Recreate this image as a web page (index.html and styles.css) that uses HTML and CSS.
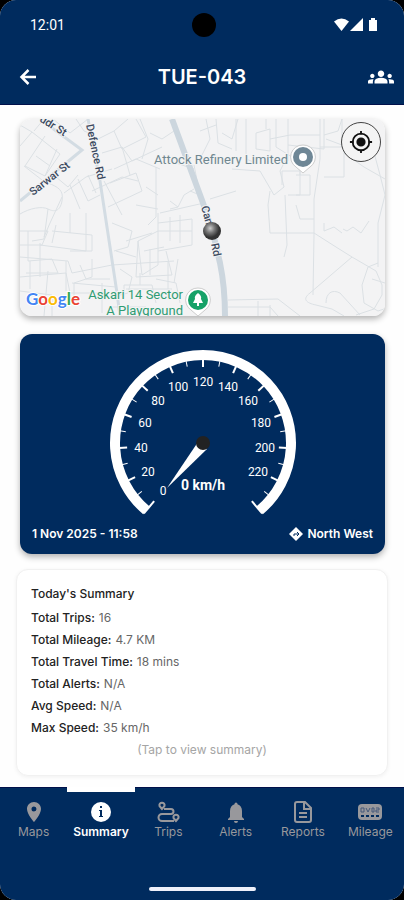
FILE: index.html
```html
<!DOCTYPE html>
<html lang="en">

<head>
    <meta charset="UTF-8">
    <meta name="viewport" content="width=device-width, initial-scale=1.0">
    <title>TUE-043</title>
    <link rel="stylesheet" href="styles.css">
</head>

<body>
    <div class="screen">
        <header>
            <div class="status">
                <span class="time">12:01</span>
                <span class="camera"></span>
                <svg class="signals" width="44" height="16" viewBox="0 0 44 16" fill="#fff">
                    <path d="M0 4.500Q7.500-1.500 15 4.500L7.500 14z" />
                    <path d="M29 1v13H16z" />
                    <path d="M37 1h4v2h2v11h-8V3h2z" />
                </svg>
            </div>
            <div class="title-bar">
                <button class="icon-btn back" aria-label="Back">
                    <svg width="24" height="24" viewBox="0 0 24 24" fill="none" stroke="#fff" stroke-width="2.500">
                        <path d="M20 12H6M12.500 5l-7 7 7 7" />
                    </svg>
                </button>
                <h1>TUE-043</h1>
                <button class="icon-btn group" aria-label="Group">
                    <svg width="26" height="26" viewBox="0 0 24 24" fill="#fff">
                        <path d="M12 12.750c1.630 0 3.070.390 4.240.900 1.080.480 1.760 1.560 1.760 2.730V18H6v-1.610c0-1.180.680-2.260 1.760-2.730 1.170-.520 2.610-.910 4.240-.910zM4 13c1.100 0 2-.900 2-2s-.900-2-2-2-2 .900-2 2 .900 2 2 2zm1.130 1.100C4.760 14.040 4.390 14 4 14c-.990 0-1.930.210-2.780.580C.480 14.900 0 15.620 0 16.430V18h4.500v-1.610c0-.830.230-1.610.630-2.290zM20 13c1.100 0 2-.900 2-2s-.900-2-2-2-2 .900-2 2 .900 2 2 2zm4 3.430c0-.810-.480-1.530-1.220-1.850C21.930 14.210 20.990 14 20 14c-.390 0-.760.040-1.130.100.400.680.630 1.460.630 2.290V18H24v-1.570zM12 6c1.660 0 3 1.340 3 3s-1.340 3-3 3-3-1.340-3-3 1.340-3 3-3z" />
                    </svg>
                </button>
            </div>
        </header>

        <main>
            <section class="map">
                <svg class="map-img" viewBox="0 0 365 197" preserveAspectRatio="xMidYMid slice">
                    <defs>
                        <radialGradient id="ball" cx="40%" cy="35%">
                            <stop offset="0" stop-color="#ccc" />
                            <stop offset="0.500" stop-color="#777" />
                            <stop offset="1" stop-color="#333" />
                        </radialGradient>
                    </defs>
                    <rect width="365" height="197" fill="#f3f3f4" />
                    <!-- small streets -->
                    <g fill="none" stroke="#dbe0e4" stroke-width="1">
                        <path d="M0 27l12-14 28 22-15 22-20-10 20-30M14 12l10-12M16 37l14 10M25 57l12-27M4 47l18 14M33 0l17 14 18-14M56 0l8 12 10 4M0 6l12 7" />
                        <path d="M0 95c10-6 22-8 28-5s12 3 14-8-4-14-14-18l8-6 12 10 10-12M28 90l-4 30-12 2M42 78l-12 26-6 14M44 74l22-16 26-8M50 66l10 24M58 60l10 22 12-6M68 56l8 18M72 72l30-14 16 4M88 88l34-16-6-18-26 10M84 62l18 34" />
                        <path d="M78 20l16-8 8 18 24-12-10-18M82 34l20-6 10 14 30-14M94 12l14-12M94 50l22-10 24 10M102 28l8 28M120 0l8 20-6 20M130 14l12 6 12-8M136 48v50l-8 8M116 86l22 4M126 68l12 8" />
                        <path d="M150 82l8 6 6-12 10-6M158 88l-8 2M174 46l6 30-10-4M150 42l24 8M140 94l44-10M138 104l34-4v26l-34 6M138 94v52l-16 10-4-34 20-10M150 98v24M160 96v28M138 112h34" />
                        <path d="M0 112h28l-6 14H0M8 112v30l24-2 6 14H6M20 126l46 6v-38M36 106l-4 18M32 112l40 4v16H50M50 94v20M0 138l48 4 4 12 40-8 62-4M10 142v28M20 124v34M0 158l46-4 4 20h36M28 152l-4 45M46 142v30M0 172l32 4v21M60 146l6 14h24M72 140v18l-18 6v20M52 164l44 4M100 150l12 8-4 16-16 4M118 122l-2 36 36-2-6-24M124 132l20-4M130 130v26M106 122l26-8M92 104l20 8-4 16-14 4M96 132l20 6" />
                        <path d="M104 180v-14h28l4 18M120 166v-12M136 160l20 4 4 20M148 142v36M158 140l-4 24M106 170h46M82 164v30M92 188h34" />
                        <path d="M186 0l4 20-8 16M180 12l16-6M196 0l2 24 14 6M202 14l10 6 6-20M216 0v32M226 0v40l10 4M236 14l14-4v22l-14-2V14M246 10V0M256 0v28l16 10 16-10M250 20l20-4h30M268 0v42M268 26l36 4V0M304 16l14-4 4-12M300 0v40l-6 40v36l-1 60M322 0v28h-22M306 20l16 6M324 28v30h-20M324 34l20 14 21 12" />
                        <path d="M212 50l28 2 14 24 10-8-4-16 6-12M250 72l-2 14 2 28h44M262 66v-14h18v24h-12M276 56h14v20h-14M265 76l2 50-3 12M276 86l4 14h14M190 80l26-8M280 30v26" />
                        <path d="M294 114l22 14 16 10 24 14 6 14v10l-8 14-18 6M352 26l8 30 5 20-7 28v44M323 110l4 2 6-4 8 6 8-12M304 104v8l10-4 8 6M332 138l-42 36c-8 6-4 10 6 12l16 4 12 7M306 184c0-10 6-14 14-10l20 22M358 144l-10 4-6 18 2 18 14 8 6-2M352 160l13 4" />
                        <path d="M208 181l50-1 22 17M208 188h42l8 9M238 182v15M250 186v11" />
                    </g>
                    <g fill="none" stroke="#d3dce3">
                        <path d="M0 82L62 31 20 0" stroke-width="3" />
                        <path d="M68 0l12 62 17 112 3 23" stroke-width="3" />
                        <path d="M152 0l31 84 10 30 7 30q5 24 5 53" stroke="#ccd6de" stroke-width="6" />
                    </g>
                    <!-- street names -->
                    <g class="street">
                        <text transform="translate(19 2) rotate(32)">ddr St</text>
                        <text transform="translate(66 6) rotate(78)">Defence Rd</text>
                        <text transform="translate(13 77) rotate(-38)">Sarwar St</text>
                        <text transform="translate(181 88) rotate(74)">Cano</text>
                        <text transform="translate(191 125) rotate(78)">Rd</text>
                    </g>
                    <text class="place" x="268" y="45" text-anchor="end">Attock Refinery Limited</text>
                    <g class="place park">
                        <text x="163" y="180" text-anchor="end">Askari 14 Sector</text>
                        <text x="163" y="196" text-anchor="end">A Playground</text>
                    </g>
                    <!-- pins -->
                    <path d="M283 26a12 12 0 0 1 7 22l-7 6-7-6a12 12 0 0 1 7-22z" fill="#fff" stroke="#ccc" />
                    <circle cx="283" cy="38" r="10" fill="#6f8796" />
                    <circle cx="283" cy="38" r="4" fill="#fff" />
                    <path d="M178 169a12 12 0 0 1 7 22l-7 6-7-6a12 12 0 0 1 7-22z" fill="#fff" stroke="#ccc" />
                    <circle cx="178" cy="181" r="10" fill="#16a268" />
                    <path d="M178 174q-4 3-3 6l-2 4h4v3h2v-3h4l-2-4q1-3-3-6z" fill="#fff" />
                    <circle cx="192" cy="112" r="9" fill="url(#ball)" />
                    <text class="google" x="6" y="186"><tspan fill="#4285f4">G</tspan><tspan fill="#ea4335">o</tspan><tspan fill="#fbbc05">o</tspan><tspan fill="#4285f4">g</tspan><tspan fill="#34a853">l</tspan><tspan fill="#ea4335">e</tspan></text>
                </svg>
                <button class="locate" aria-label="Locate">
                    <svg width="24" height="24" viewBox="0 0 26 26" fill="none" stroke="#111" stroke-width="2">
                        <circle cx="13" cy="13" r="9" />
                        <circle cx="13" cy="13" r="4" fill="#111" />
                        <path d="M13 1v4M13 21v4M1 13h4M21 13h4" />
                    </svg>
                </button>
            </section>

            <section class="speed">
                <svg class="gauge" width="190" height="170" viewBox="-95 -95 190 170">
                    <path d="M-56.600 67.400A88 88 0 1 1 56.600 67.400" fill="none" stroke="#fff" stroke-width="10" />
                    <g id="ticks"></g>
                    <path d="M-5-1L-36 45 4 6z" fill="#fff" />
                    <circle r="7" fill="#222" />
                    <text class="speed-value" x="0" y="47">0 km/h</text>
                </svg>
                <div class="speed-info">
                    <span>1 Nov 2025 - 11:58</span>
                    <span class="heading">
                        <svg width="14" height="14" viewBox="0 0 14 14">
                            <path d="M7 0l7 7-7 7-7-7z" fill="#fff" />
                            <path d="M5 9V7h4M8 5l2 2-2 2" fill="none" stroke="#002b5e" />
                        </svg>
                        North West
                    </span>
                </div>
            </section>

            <section class="summary">
                <h2>Today's Summary</h2>
                <dl>
                    <div><dt>Total Trips:</dt><dd>16</dd></div>
                    <div><dt>Total Mileage:</dt><dd>4.7 KM</dd></div>
                    <div><dt>Total Travel Time:</dt><dd>18 mins</dd></div>
                    <div><dt>Total Alerts:</dt><dd>N/A</dd></div>
                    <div><dt>Avg Speed:</dt><dd>N/A</dd></div>
                    <div><dt>Max Speed:</dt><dd>35 km/h</dd></div>
                </dl>
                <a class="more" href="#summary">(Tap to view summary)</a>
            </section>
        </main>

        <footer>
            <nav>
                <a href="#maps">
                    <svg width="24" height="24" viewBox="0 0 24 24" fill="currentColor">
                        <path d="M12 2C8.100 2 5 5.100 5 9c0 5.200 7 13 7 13s7-7.800 7-13c0-3.900-3.100-7-7-7zm0 9.500a2.500 2.500 0 1 1 0-5 2.500 2.500 0 0 1 0 5z" />
                    </svg>
                    Maps
                </a>
                <a class="active" href="#summary">
                    <svg width="24" height="24" viewBox="0 0 24 24">
                        <circle cx="12" cy="12" r="10" fill="currentColor" />
                        <path d="M11 6h2v2h-2zM10 10h3v6h1v1h-4v-1h1v-5h-1z" fill="#002b5e" />
                    </svg>
                    Summary
                </a>
                <a href="#trips">
                    <svg width="24" height="24" viewBox="0 0 24 24" fill="none" stroke="currentColor" stroke-width="2">
                        <path d="M6 9L3.500 6a2.600 2.600 0 1 1 5 0zM20 21l-2.500-3a2.600 2.600 0 1 1 5 0z" />
                        <path d="M8 9h7a2.500 2.500 0 0 1 0 5H6a3.500 3.500 0 0 0 0 7h12" />
                    </svg>
                    Trips
                </a>
                <a href="#alerts">
                    <svg width="24" height="24" viewBox="0 0 24 24" fill="currentColor">
                        <path d="M20 19v1H4v-1l2-2v-6c0-3.100 1.500-5.800 4.500-6.700V4a1.500 1.500 0 0 1 3 0v.300c3 .900 4.500 3.600 4.500 6.700v6zm-6 2a2 2 0 0 1-4 0" />
                    </svg>
                    Alerts
                </a>
                <a href="#reports">
                    <svg width="24" height="24" viewBox="0 0 24 24" fill="none" stroke="currentColor" stroke-width="2">
                        <path d="M14 2H6a2 2 0 0 0-2 2v16a2 2 0 0 0 2 2h12a2 2 0 0 0 2-2V8zM13 2v7h7M8 13h8M8 17h8" />
                    </svg>
                    Reports
                </a>
                <a href="#mileage">
                    <svg width="24" height="24" viewBox="0 0 24 24">
                        <rect x="0" y="4" width="24" height="16" rx="4" fill="currentColor" />
                        <path d="M3 8h3v4H3zM8 8l2 4 2-4M14 8h2v4h-2zM18 8h3v2h-3v2h3" fill="none" stroke="#44597a" />
                        <path d="M3 16h3m2 0h3m2 0h3m2 0h3" fill="none" stroke="#002b5e" stroke-width="2" />
                    </svg>
                    Mileage
                </a>
            </nav>
            <div class="home-bar"></div>
        </footer>
    </div>

    <script>
        const ticks = document.querySelector('#ticks');
        const maxSpeed = 240;
        const sweep = 280;
        let marks = '';

        for (let speed = 0; speed <= maxSpeed; speed += 10) {
            const angle = speed / maxSpeed * sweep - sweep / 2;
            const major = speed % 20 == 0;
            // first and last ticks close the arc
            const end = speed == 0 || speed == maxSpeed;
            const length = end ? 16 : (major ? 8 : 6);
            const start = end ? -92 : -84;
            marks += `<path d="M0 ${start}v${length}" transform="rotate(${angle})" stroke="#fff" stroke-width="${major ? 2 : 1}" />`;
            if (major && speed < maxSpeed) {
                const rad = angle * Math.PI / 180;
                const x = Math.round(62 * Math.sin(rad));
                const y = Math.round(-62 * Math.cos(rad)) + 5;
                marks += `<text class="tick-label" x="${x}" y="${y}">${speed}</text>`;
            }
        }
        ticks.innerHTML = marks;
    </script>
</body>

</html>
```
FILE: styles.css
```css
* {
    box-sizing: border-box;
}

body {
    margin: 0;
    background-color: #000;
    font-family: Inter, 'Segoe UI', sans-serif;
    font-size: 12px;
}

h1, h2, dl, dd {
    margin: 0;
}

a {
    text-decoration: none;
}

button {
    padding: 0;
    cursor: pointer;
}

.screen {
    display: flex;
    flex-direction: column;
    min-height: 100vh;
    background-color: #fefefe;
    border-radius: 16px;
    overflow: hidden;
}

header {
    background-color: #002b5e;
    color: #fff;
    border-bottom: 1px solid #00104a;
}

.status {
    display: grid;
    grid-template-columns: 1fr 24px 1fr;
    align-items: center;
    height: 50px;
    padding: 0 26px 0 30px;
}

.time {
    font-family: Roboto, sans-serif;
    font-size: 14px;
}

.camera {
    width: 24px;
    height: 24px;
    border-radius: 50%;
    background-color: #000;
}

.signals {
    justify-self: end;
}

.title-bar {
    display: grid;
    grid-template-columns: 1fr auto 1fr;
    align-items: center;
    height: 54px;
    padding: 0 10px;
}

.title-bar h1 {
    font-size: 20px;
    font-weight: 600;
}

.icon-btn {
    display: flex;
    border: none;
    background: none;
}

.back {
    justify-self: start;
    padding-left: 6px;
}

.group {
    justify-self: end;
}

main {
    flex: 1;
    display: flex;
    flex-direction: column;
    padding: 14px 16px 11px;
}

.map {
    position: relative;
    margin: 0 3px 18px 4px;
    border-radius: 12px;
    box-shadow: 0 3px 6px rgba(0, 0, 0, 0.3);
    overflow: hidden;
}

.map-img {
    display: block;
    width: 100%;
}

.street {
    font-family: Roboto, sans-serif;
    font-size: 11px;
    font-weight: 500;
    fill: #3c4a60;
    stroke: #f3f3f4;
    stroke-width: 2px;
    paint-order: stroke;
}

.place {
    font-family: Roboto, sans-serif;
    font-size: 13px;
    fill: #6f8790;
    stroke: #f3f3f4;
    stroke-width: 2px;
    paint-order: stroke;
}

.park {
    fill: #2f9c73;
}

.google {
    font-family: Lato, sans-serif;
    font-size: 17px;
    font-weight: bold;
    stroke: #fff;
    stroke-width: 2px;
    paint-order: stroke;
}

.locate {
    position: absolute;
    top: 3px;
    right: 4px;
    display: flex;
    align-items: center;
    justify-content: center;
    width: 40px;
    height: 40px;
    border: 1px solid #444;
    border-radius: 50%;
    background-color: #f4f4f4;
}

.speed {
    display: flex;
    flex-direction: column;
    align-items: center;
    margin: 0 3px 15px 4px;
    padding: 14px 12px 12px;
    border-radius: 12px;
    background-color: #002b5e;
    box-shadow: 0 3px 6px rgba(0, 0, 0, 0.3);
    color: #fff;
}

.tick-label {
    font-family: Roboto, sans-serif;
    font-size: 12px;
    fill: #fff;
    text-anchor: middle;
}

.speed-value {
    font-family: Roboto, sans-serif;
    font-size: 14px;
    font-weight: bold;
    fill: #fff;
    text-anchor: middle;
}

.speed-info {
    display: flex;
    justify-content: space-between;
    width: 100%;
    margin-top: 8px;
    line-height: 16px;
    font-weight: 600;
}

.heading {
    display: flex;
    align-items: center;
    gap: 4px;
}

.summary {
    flex: 1;
    display: flex;
    flex-direction: column;
    padding: 13px 14px;
    border: 1px solid #f1f1f1;
    border-radius: 12px;
    background-color: #fff;
    box-shadow: 0 1px 4px rgba(0, 0, 0, 0.06);
    color: #222;
    line-height: 22px;
}

.summary h2 {
    margin-bottom: 2px;
    font-size: 12px;
    font-weight: 500;
}

.summary dl div {
    display: flex;
    gap: 4px;
}

.summary dt {
    font-weight: 500;
}

.summary dd {
    color: #666;
}

.more {
    align-self: center;
    color: #a5a5a5;
}

footer {
    background-color: #002b5e;
    border-top: 1px solid #00104a;
}

nav {
    display: grid;
    grid-template-columns: repeat(6, 1fr);
    margin-top: -1px;
}

nav a {
    display: flex;
    flex-direction: column;
    align-items: center;
    padding-top: 8px;
    border-top: 5px solid transparent;
    color: #98989c;
    line-height: 16px;
}

nav .active {
    border-color: #fff;
    color: #fff;
    font-weight: 600;
}

.home-bar {
    width: 107px;
    height: 4px;
    margin: 47px auto 9px;
    border-radius: 2px;
    background-color: #eef0fa;
}
```
